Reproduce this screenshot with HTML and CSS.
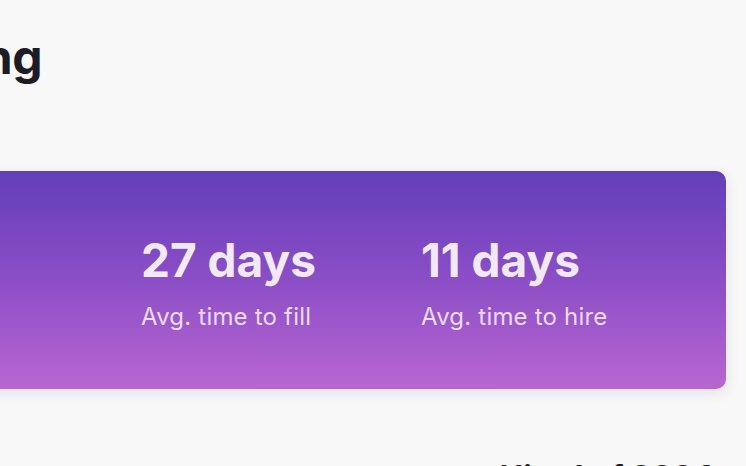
FILE: index.html
```html
<!DOCTYPE html>
<html lang="en">
<head>
    <meta charset="UTF-8">
    <meta name="viewport" content="width=device-width, initial-scale=1.0">
    <title>Recruiting</title>
    <link rel="stylesheet" href="styles.css">
</head>
<body>

    <div class="page">
        <h1>Recruiting</h1>

        <div class="stats-card">
            <div class="stat">
                <p class="value">27 days</p>
                <p class="label">Avg. time to fill</p>
            </div>
            <div class="stat">
                <p class="value">11 days</p>
                <p class="label">Avg. time to hire</p>
            </div>
        </div>

        <div class="section-head">
            <h2>Candidates</h2>
            <h2 class="right">Hired of 2024</h2>
        </div>
    </div>

</body>
</html>
```

FILE: styles.css
```css
body {
    margin: 0;
    padding: 0;
    font-family: Inter, "Noto Sans", sans-serif;
    background-color: #f8f8f8;
    overflow: hidden;
}

.page {
    margin-left: -187px;
    width: 913px;
    padding-top: 28px;
}

h1 {
    margin: 0 0 0 -7px;
    font-size: 48px;
    font-weight: 700;
    line-height: 1.2;
    color: #1d1c24;
    letter-spacing: -0.5px;
}

.stats-card {
    margin-top: 85px;
    height: 218px;
    box-sizing: border-box;
    padding: 6px 48px 0 328px;
    border-radius: 10px;
    background: linear-gradient(180deg, #633eba 0%, #8b4ec6 50%, #b966d1 100%);
    box-shadow: 0 4px 14px rgba(40, 20, 80, 0.10);
    display: grid;
    grid-template-columns: 280px 1fr;
    align-items: center;
}

.stat p {
    margin: 0;
}

.stat .value {
    font-size: 46px;
    font-weight: 700;
    line-height: 1.2;
    color: #f1eaf6;
}

.stat .label {
    margin-top: 15px;
    font-size: 24px;
    font-weight: 400;
    line-height: 1.2;
    letter-spacing: 0.2px;
    color: #eadcf4;
}

.section-head {
    display: flex;
    justify-content: space-between;
    margin-top: 69px;
}

.section-head h2 {
    margin: 0;
    font-size: 32px;
    font-weight: 700;
    color: #1d1c24;
}

.section-head .right {
    margin-right: 12px;
}
```
